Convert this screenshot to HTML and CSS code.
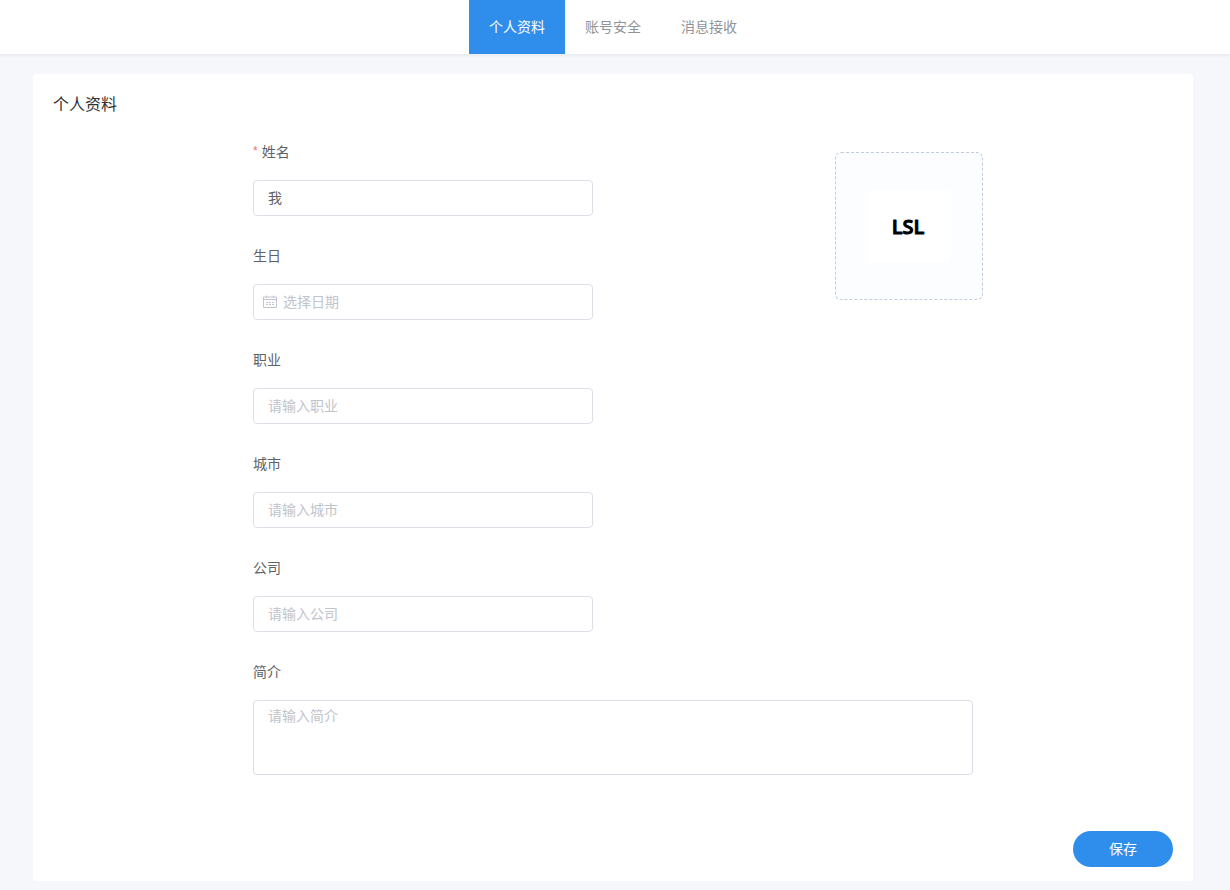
FILE: index.html
```html
<!DOCTYPE html>
<html lang="zh-CN">
<head>
<meta charset="utf-8">
<meta name="viewport" content="width=device-width, initial-scale=1">
<title>个人资料</title>
<link rel="stylesheet" href="styles.css">
</head>
<body>
<header class="topbar">
  <nav class="tabs">
    <a class="tab tab-active" href="#profile" aria-current="page">个人资料</a>
    <a class="tab" href="#security">账号安全</a>
    <a class="tab" href="#messages">消息接收</a>
  </nav>
</header>
<main class="page">
  <form class="card" id="profile">
    <h1 class="title">个人资料</h1>
    <div class="body">
      <div class="columns">
        <div class="fields">
          <div class="field">
            <label class="label required" for="name">姓名</label>
            <input class="control" id="name" type="text" value="我" required>
          </div>
          <div class="field">
            <label class="label" for="birthday">生日</label>
            <div class="control date">
              <svg class="calendar" viewBox="0 0 14 14" width="14" height="14" fill="none" stroke="currentColor" aria-hidden="true">
                <path d="M.5 2H13.5V12.5H.5ZM.5 4.5H13.5M3.5 .5V3M10.5 .5V3"/>
                <path d="M3 7.5H5M6 7.5H8M9 7.5H11M3 9.5H5M6 9.5H8M9 9.5H11"/>
              </svg>
              <input class="date-input" id="birthday" type="text" placeholder="选择日期">
            </div>
          </div>
          <div class="field">
            <label class="label" for="job">职业</label>
            <input class="control" id="job" type="text" placeholder="请输入职业">
          </div>
          <div class="field">
            <label class="label" for="city">城市</label>
            <input class="control" id="city" type="text" placeholder="请输入城市">
          </div>
          <div class="field">
            <label class="label" for="company">公司</label>
            <input class="control" id="company" type="text" placeholder="请输入公司">
          </div>
        </div>
        <button class="avatar" type="button" aria-label="上传头像">
          <svg class="avatar-image" viewBox="0 0 82 72" width="82" height="72" aria-hidden="true">
            <rect width="82" height="72" fill="#fff"/>
            <text class="avatar-text" x="40" y="44" text-anchor="middle">LSL</text>
          </svg>
        </button>
      </div>
      <div class="field">
        <label class="label" for="intro">简介</label>
        <textarea class="control intro" id="intro" placeholder="请输入简介"></textarea>
      </div>
    </div>
    <div class="actions">
      <button class="save" type="submit">保存</button>
    </div>
  </form>
</main>
</body>
</html>
```
FILE: styles.css
```css
* {
  box-sizing: border-box;
}

body {
  margin: 0;
  background: #f5f7fb;
  color: #606266;
  font: 14px/20px "Noto Sans CJK SC", sans-serif;
}

input,
textarea,
button {
  font: inherit;
}

.topbar {
  padding-right: 4px;
  background: #fff;
  box-shadow: 0 1px 4px rgba(0, 21, 41, 0.08);
}

.tabs {
  display: flex;
  justify-content: center;
}

.tab {
  padding: 0 20px 2px;
  line-height: 52px;
  color: #909399;
  text-decoration: none;
}

.tab-active {
  background: #2f8dec;
  color: #fff;
}

.page {
  padding: 20px 24px 9px 20px;
}

.card {
  max-width: 1160px;
  margin: 0 auto;
  padding: 20px 20px 14px;
  border-radius: 4px;
  background: #fff;
}

.title {
  margin: 0;
  color: #303133;
  font-size: 16px;
  font-weight: 400;
  line-height: 18px;
}

.body {
  max-width: 720px;
  margin: 22px auto 0;
}

.columns {
  display: flex;
  align-items: flex-start;
  justify-content: space-between;
  gap: 20px;
  margin-right: -10px;
}

.fields {
  flex: 0 1 340px;
}

.field {
  margin-bottom: 22px;
}

.label {
  display: flex;
  margin-bottom: 12px;
  line-height: 34px;
}

.required::before {
  content: "*";
  margin-right: 4px;
  color: #f56c6c;
  font-size: 12px;
  font-family: "Liberation Sans", sans-serif;
}

.control {
  display: block;
  width: 100%;
  height: 36px;
  padding: 0 14px 2px;
  border: 1px solid #dcdfe6;
  border-radius: 4px;
  outline: none;
  background: #fff;
  color: #606266;
}

.date {
  display: flex;
  align-items: center;
  gap: 6px;
  padding: 0 9px;
}

.calendar {
  flex: none;
  color: #c0c4cc;
}

.date-input {
  flex: 1;
  min-width: 0;
  padding: 0 0 2px;
  border: 0;
  outline: none;
  background: none;
  color: inherit;
}

::placeholder {
  color: #c0c4cc;
  opacity: 1;
}

.intro {
  height: 75px;
  padding: 4px 14px;
  resize: none;
}

.control:focus,
.control:focus-within {
  border-color: #2f8dec;
}

.avatar {
  display: flex;
  flex: none;
  align-items: center;
  justify-content: center;
  width: 148px;
  height: 148px;
  margin-top: 18px;
  padding: 0;
  border: 1px dashed #c0ccda;
  border-radius: 6px;
  background: #fbfdff;
  cursor: pointer;
}

.avatar-text {
  fill: #000;
  stroke: #000;
  stroke-width: 1px;
  stroke-linejoin: round;
  font: 600 20px "Comic Sans MS", "Open Sans", sans-serif;
}

.actions {
  display: flex;
  justify-content: flex-end;
  margin-top: 56px;
}

.save {
  width: 100px;
  height: 36px;
  padding: 0 0 2px;
  border: 0;
  border-radius: 18px;
  background: #2f8dec;
  color: #fff;
  cursor: pointer;
}
```
